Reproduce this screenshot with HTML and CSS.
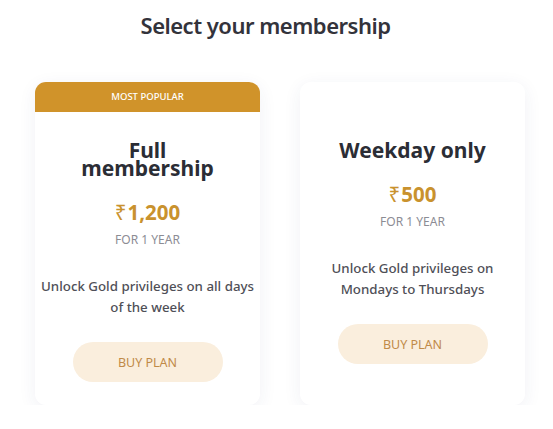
FILE: index.html
```html
<!DOCTYPE html>
<html>
<head>
<meta charset="utf-8">
<link rel="stylesheet" href="styles.css">
</head>
<body>
<div class="page">
  <h1 class="heading">Select your membership</h1>
  <div class="plans">
    <div class="card">
      <div class="badge">MOST POPULAR</div>
      <div class="body">
        <h2 class="name">Full<br>membership</h2>
        <div class="price"><span class="cur">₹</span>1,200</div>
        <div class="term">FOR 1 YEAR</div>
        <p class="desc">Unlock Gold privileges on all days of the week</p>
        <button class="buy">BUY PLAN</button>
      </div>
    </div>
    <div class="card">
      <div class="badge blank"></div>
      <div class="body">
        <h2 class="name">Weekday only</h2>
        <div class="price"><span class="cur">₹</span>500</div>
        <div class="term">FOR 1 YEAR</div>
        <p class="desc">Unlock Gold privileges on Mondays to Thursdays</p>
        <button class="buy">BUY PLAN</button>
      </div>
    </div>
  </div>
</div>
</body>
</html>
```
FILE: styles.css
```css
html, body {
  margin: 0;
  padding: 0;
  background: #ffffff;
}
.page {
  width: 553px;
  font-family: "Noto Sans", "Open Sans", sans-serif;
  color: #2f2f37;
}
.heading {
  margin: 0;
  padding: 9px 22px 0 0;
  text-align: center;
  font-size: 22px;
  line-height: 32px;
  font-weight: 600;
  letter-spacing: -0.5px;
  color: #33333b;
}
.plans {
  display: flex;
  justify-content: center;
  align-items: stretch;
  gap: 40px;
  padding-top: 41px;
  padding-left: 7px;
}
.card {
  width: 225px;
  height: 323px;
  border-radius: 11px;
  background: #fff;
  box-shadow: 0 4px 18px rgba(40, 50, 120, 0.07);
  display: flex;
  flex-direction: column;
  overflow: hidden;
}
.badge {
  height: 30px;
  background: #d0932a;
  color: #fff;
  font-size: 9.5px;
  line-height: 30px;
  text-align: center;
  font-weight: 500;
}
.badge.blank {
  background: transparent;
}
.body {
  display: flex;
  flex-direction: column;
  align-items: center;
  text-align: center;
  padding-top: 29px;
}
.name {
  margin: 0;
  font-size: 21px;
  line-height: 18px;
  font-weight: 700;
  color: #2b2d35;
}
.price {
  margin-top: 22px;
  font-size: 20.5px;
  line-height: 26px;
  font-weight: 700;
  color: #c9922e;
}
.cur {
  font-weight: 400;
  margin-right: 1px;
}
.term {
  margin-top: 7px;
  font-size: 12px;
  line-height: 16px;
  color: #8c8c94;
}
.desc {
  margin: 28px 0 0;
  padding: 0 3px;
  font-size: 13.3px;
  line-height: 21px;
  font-weight: 500;
  color: #4f4f57;
}
.buy {
  margin-top: 24px;
  width: 150px;
  height: 40px;
  border: none;
  border-radius: 20px;
  background: #faeedd;
  color: #c08a48;
  font-family: inherit;
  font-size: 12.5px;
  cursor: pointer;
}
```
